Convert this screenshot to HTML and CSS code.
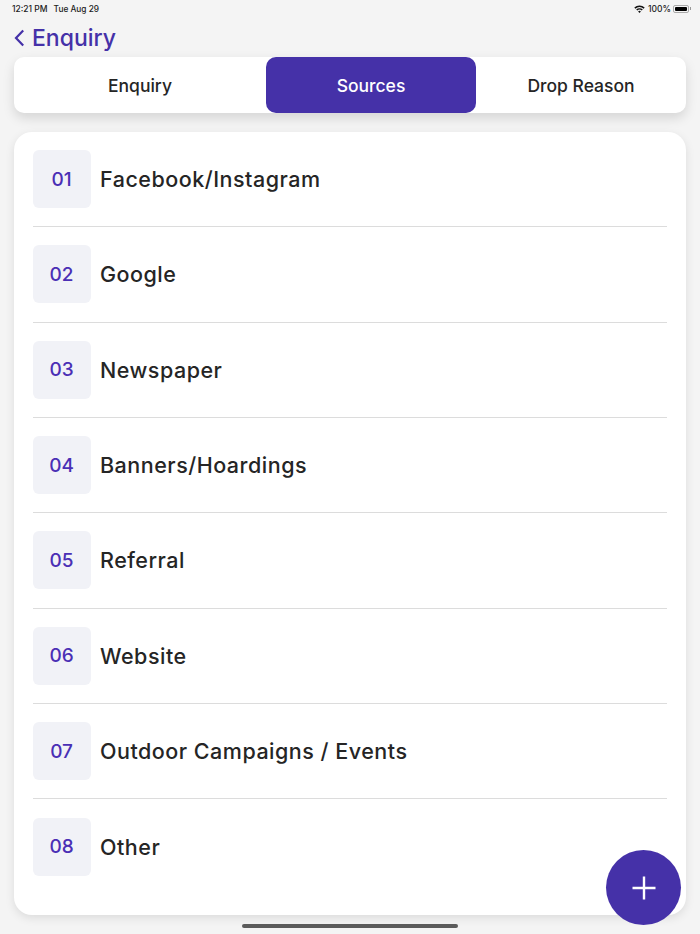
FILE: index.html
```html
<!DOCTYPE html>
<html>
<head>
    <meta charset="utf-8">
    <link rel="stylesheet" href="styles.css">
</head>
<body>
    <div class="status-bar">
        <div class="status-time">12:21 PM<span class="status-date">Tue Aug 29</span></div>
        <div class="status-right">
            <svg class="wifi-icon" width="11" height="8" viewBox="0 0 11 8">
                <path d="M0.3 2.6A7.4 7.4 0 0 1 10.7 2.6L9.6 3.7A5.9 5.9 0 0 0 1.4 3.7Z" fill="#111"/>
                <path d="M2.2 4.5A4.7 4.7 0 0 1 8.8 4.5L7.7 5.6A3.2 3.2 0 0 0 3.3 5.6Z" fill="#111"/>
                <path d="M4.1 6.4A2 2 0 0 1 6.9 6.4L5.5 7.9Z" fill="#111"/>
            </svg>
            <span>100%</span>
            <div class="battery"><div class="battery-fill"></div></div>
            <div class="battery-tip"></div>
        </div>
    </div>

    <div class="nav-title">
        <svg class="back-icon" width="11" height="18" viewBox="0 0 11 18">
            <path d="M9.2 1.5L2 9L9.2 16.5" fill="none" stroke="#4531a8" stroke-width="2.2"/>
        </svg>
        <span>Enquiry</span>
    </div>

    <div class="tabs">
        <div class="tab tab-first">Enquiry</div>
        <div class="tab tab-active">Sources</div>
        <div class="tab">Drop Reason</div>
    </div>

    <div class="list-card">
        <div class="list-row">
            <div class="row-num">01</div>
            <div class="row-name">Facebook/Instagram</div>
        </div>
        <div class="list-row">
            <div class="row-num">02</div>
            <div class="row-name">Google</div>
        </div>
        <div class="list-row">
            <div class="row-num">03</div>
            <div class="row-name">Newspaper</div>
        </div>
        <div class="list-row">
            <div class="row-num">04</div>
            <div class="row-name">Banners/Hoardings</div>
        </div>
        <div class="list-row">
            <div class="row-num">05</div>
            <div class="row-name">Referral</div>
        </div>
        <div class="list-row">
            <div class="row-num">06</div>
            <div class="row-name">Website</div>
        </div>
        <div class="list-row">
            <div class="row-num">07</div>
            <div class="row-name">Outdoor Campaigns / Events</div>
        </div>
        <div class="list-row">
            <div class="row-num">08</div>
            <div class="row-name">Other</div>
        </div>
    </div>

    <div class="fab">
        <svg width="26" height="26" viewBox="0 0 26 26">
            <path d="M13 1.5V24.5M1.5 13H24.5" fill="none" stroke="white" stroke-width="2.4"/>
        </svg>
    </div>

    <div class="home-indicator"></div>
</body>
</html>
```

FILE: styles.css
```css
html, body {
    height: 100%;
}

body {
    position: relative;
    height: 934px;
    margin: 0;
    padding: 0 14px;
    box-sizing: border-box;
    overflow: hidden;
    font-family: Inter, "Liberation Sans", sans-serif;
    background: #f4f4f4;
    color: #252525;
}

.status-bar {
    display: flex;
    justify-content: space-between;
    align-items: center;
    height: 17px;
    margin: 0 -5px 0 -2px;
    font-size: 8.5px;
    font-weight: 500;
    color: #222;
}

.status-date {
    margin-left: 6px;
    font-size: 8.3px;
}

.status-right {
    display: flex;
    align-items: center;
}

.wifi-icon {
    margin-right: 3px;
}

.battery {
    width: 16px;
    height: 8px;
    margin-left: 2px;
    padding: 1px;
    box-sizing: border-box;
    border: 1px solid #aaa;
    border-radius: 2px;
}

.battery-fill {
    height: 100%;
    background: #000;
    border-radius: 1px;
}

.battery-tip {
    width: 1px;
    height: 3px;
    margin-left: 1px;
    background: #999;
}

.nav-title {
    display: flex;
    align-items: center;
    height: 40px;
    padding-top: 2px;
    box-sizing: border-box;
    font-size: 23px;
    font-weight: 500;
    color: #4531a8;
}

.back-icon {
    margin-right: 7px;
}

.tabs {
    display: flex;
    height: 56px;
    background: white;
    border-radius: 10px;
    box-shadow: 0 5px 12px rgba(0,0,0,0.13);
}

.tab {
    display: flex;
    justify-content: center;
    align-items: center;
    width: 210px;
    font-size: 17.5px;
    font-weight: 450;
}

.tab-first {
    width: 252px;
}

.tab-active {
    background: #4531a8;
    color: white;
    border-radius: 10px;
}

.list-card {
    display: flex;
    flex-direction: column;
    height: 783px;
    margin-top: 19px;
    padding: 0 19px;
    box-sizing: border-box;
    background: white;
    border-radius: 18px;
    box-shadow: 0 3px 10px rgba(0,0,0,0.1);
}

.list-row {
    display: flex;
    align-items: center;
    gap: 9px;
    height: 95.33px;
    flex: none;
    box-sizing: border-box;
    border-bottom: 1px solid #dcdcdc;
}

.list-row:last-child {
    border-bottom: none;
}

.row-num {
    display: flex;
    justify-content: center;
    align-items: center;
    width: 58px;
    height: 58px;
    padding-right: 1px;
    box-sizing: border-box;
    background: #f1f2f7;
    border-radius: 6px;
    font-size: 19px;
    font-weight: 450;
    color: #4a2fb5;
}

.row-name {
    font-size: 21.5px;
    font-weight: 450;
    letter-spacing: 0.5px;
}

.fab {
    position: absolute;
    left: 606px;
    top: 850px;
    display: flex;
    justify-content: center;
    align-items: center;
    width: 75px;
    height: 75px;
    background: #4531a8;
    border-radius: 50%;
}

.home-indicator {
    position: absolute;
    left: 242px;
    top: 924px;
    width: 216px;
    height: 4px;
    background: #5c5c5c;
    border-radius: 2px;
}
```
